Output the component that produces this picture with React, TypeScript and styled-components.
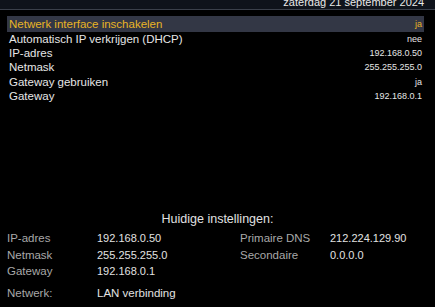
import React from "react";
import styled, { createGlobalStyle } from "styled-components";

const GlobalStyle = createGlobalStyle`
  html, body {
    margin: 0;
    padding: 0;
    background: #000000;
  }
  body {
    width: 435px;
    height: 307px;
    overflow: hidden;
    font-family: "Liberation Sans", Arial, sans-serif;
  }
`;

const Screen = styled.div`
  width: 435px;
  height: 307px;
  background: #000000;
  display: flex;
  flex-direction: column;
`;

const TopBar = styled.div`
  height: 9px;
  background: #0f131b;
  border-bottom: 1px solid #3b404b;
  display: flex;
  justify-content: flex-end;
  align-items: flex-end;
  padding-right: 11px;
  overflow: hidden;
`;

const DateText = styled.div`
  font-size: 11px;
  line-height: 11px;
  color: #e8e8e8;
  margin-bottom: 1px;
`;

const MenuList = styled.div`
  display: flex;
  flex-direction: column;
  padding: 7px 11px 0 7px;
`;

const Row = styled.div<{ $active?: boolean }>`
  height: 14.4px;
  display: flex;
  align-items: center;
  justify-content: space-between;
  padding: 0 2px;
  background: ${({ $active }) => ($active ? "#333745" : "transparent")};
  box-shadow: ${({ $active }) =>
    $active ? "0 1px 0 #333745, 0 -1px 0 #333745" : "none"};
  color: ${({ $active }) => ($active ? "#e8b425" : "#e6e6e6")};
`;

const RowLabel = styled.span`
  font-size: 11.5px;
`;

const RowValue = styled.span`
  font-size: 9px;
`;

const Spacer = styled.div`
  flex: 1;
`;

const Summary = styled.div`
  display: flex;
  flex-direction: column;
  padding: 0 7px 8px 7px;
`;

const SummaryTitle = styled.div`
  text-align: center;
  font-size: 12.5px;
  color: #e2e2e2;
  margin-bottom: 4px;
`;

const SummaryGrid = styled.div`
  display: grid;
  grid-template-columns: 90px 143px 90px 1fr;
  grid-auto-rows: 16.3px;
  align-items: center;
`;

const Label = styled.span`
  font-size: 11.5px;
  color: #a8a8a8;
`;

const Value = styled.span<{ $text?: boolean }>`
  font-size: ${({ $text }) => ($text ? "11.5px" : "11px")};
  color: #e2e2e2;
`;

const NetworkRow = styled.div`
  display: grid;
  grid-template-columns: 90px 1fr;
  margin-top: 8px;
  align-items: center;
`;

const menu = [
  { label: "Netwerk interface inschakelen", value: "ja", active: true },
  { label: "Automatisch IP verkrijgen (DHCP)", value: "nee" },
  { label: "IP-adres", value: "192.168.0.50" },
  { label: "Netmask", value: "255.255.255.0" },
  { label: "Gateway gebruiken", value: "ja" },
  { label: "Gateway", value: "192.168.0.1" },
];

const App = () => (
  <>
    <GlobalStyle />
    <Screen>
      <TopBar>
        <DateText>zaterdag 21 september 2024</DateText>
      </TopBar>
      <MenuList>
        {menu.map((item) => (
          <Row key={item.label} $active={item.active}>
            <RowLabel>{item.label}</RowLabel>
            <RowValue>{item.value}</RowValue>
          </Row>
        ))}
      </MenuList>
      <Spacer />
      <Summary>
        <SummaryTitle>Huidige instellingen:</SummaryTitle>
        <SummaryGrid>
          <Label>IP-adres</Label>
          <Value>192.168.0.50</Value>
          <Label>Primaire DNS</Label>
          <Value>212.224.129.90</Value>
          <Label>Netmask</Label>
          <Value>255.255.255.0</Value>
          <Label>Secondaire</Label>
          <Value>0.0.0.0</Value>
          <Label>Gateway</Label>
          <Value>192.168.0.1</Value>
        </SummaryGrid>
        <NetworkRow>
          <Label>Netwerk:</Label>
          <Value $text>LAN verbinding</Value>
        </NetworkRow>
      </Summary>
    </Screen>
  </>
);

export default App;
